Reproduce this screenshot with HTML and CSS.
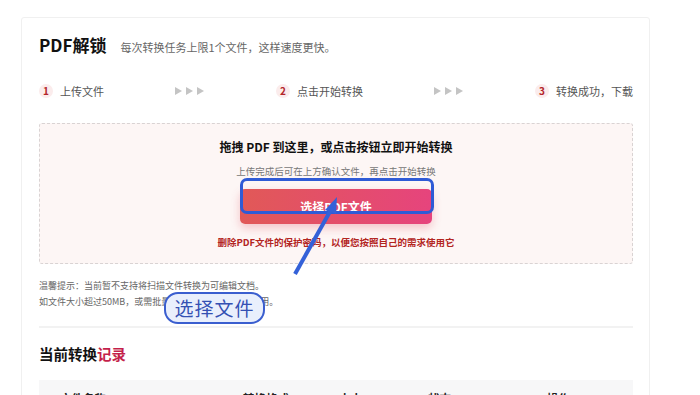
FILE: index.html
```html
<!DOCTYPE html>
<html lang="zh-CN">
<head>
    <meta charset="UTF-8">
    <title>PDF解锁</title>
    <link rel="stylesheet" href="styles.css">
</head>
<body>
    <div class="card">
        <div class="head">
            <h1>PDF解锁</h1>
            <span class="sub">每次转换任务上限1个文件，这样速度更快。</span>
        </div>

        <div class="steps">
            <div class="step"><span class="num">1</span>上传文件</div>
            <svg class="arrows" width="30" height="8" viewBox="0 0 30 8">
                <polygon points="0,0 7,4 0,8" />
                <polygon points="11,0 18,4 11,8" />
                <polygon points="22,0 29,4 22,8" />
            </svg>
            <div class="step"><span class="num">2</span>点击开始转换</div>
            <svg class="arrows" width="30" height="8" viewBox="0 0 30 8">
                <polygon points="0,0 7,4 0,8" />
                <polygon points="11,0 18,4 11,8" />
                <polygon points="22,0 29,4 22,8" />
            </svg>
            <div class="step"><span class="num">3</span>转换成功，下载</div>
        </div>

        <div class="drop">
            <p class="dropTitle">拖拽 PDF 到这里，或点击按钮立即开始转换</p>
            <p class="dropSub">上传完成后可在上方确认文件，再点击开始转换</p>
            <button class="pick" type="button">选择PDF文件</button>
            <p class="dropNote">删除PDF文件的保护密码，以便您按照自己的需求使用它</p>
        </div>

        <div class="hints">
            <p>温馨提示：当前暂不支持将扫描文件转换为可编辑文档。</p>
            <p>如文件大小超过50MB，或需批量转换，请使用客户端应用。</p>
        </div>

        <div class="sep"></div>

        <h2 class="records">当前转换<span>记录</span></h2>

        <div class="table">
            <div class="thead">
                <span>文件名称</span>
                <span>转换格式</span>
                <span>大小</span>
                <span>状态</span>
                <span>操作</span>
            </div>
        </div>
    </div>

    <!-- annotation layer -->
    <div class="mark"></div>
    <svg class="pointer" width="60" height="90" viewBox="0 0 60 90">
        <line x1="8" y1="84" x2="45" y2="18" />
        <polygon points="50,7 38,20 49,24" />
    </svg>
    <div class="label">选择文件</div>
</body>
</html>
```

FILE: styles.css
```css
* {
    margin: 0;
    padding: 0;
    box-sizing: border-box;
}

body {
    position: relative;
    background: #fff;
    color: #222;
    font-family: "Noto Sans CJK SC", "Noto Sans", sans-serif;
    overflow: hidden;
}

.card {
    margin: 17px 0 0 21px;
    width: 629px;
    height: 420px;
    padding: 15px 16px 0 17px;
    border: 1px solid #f0f0f0;
    border-radius: 3px;
    background: #fff;
}

.head {
    display: flex;
    align-items: baseline;
    height: 24px;
}

.head h1 {
    font-size: 17px;
    font-weight: bold;
    line-height: 24px;
    color: #111;
}

.head .sub {
    margin-left: 14px;
    font-size: 11px;
    color: #666;
}

.steps {
    margin-top: 25px;
    height: 18px;
    display: flex;
    align-items: center;
    justify-content: space-between;
}

.step {
    display: flex;
    align-items: center;
    font-size: 11px;
    color: #555;
}

.num {
    width: 14px;
    height: 14px;
    margin-right: 7px;
    border-radius: 50%;
    background: #fbecec;
    color: #b3242a;
    font-size: 10px;
    font-weight: bold;
    line-height: 14px;
    text-align: center;
}

.arrows polygon {
    fill: #c4c4c4;
}

.drop {
    margin-top: 23px;
    height: 141px;
    padding-top: 14px;
    border: 1px dashed #d9d3d3;
    border-radius: 3px;
    background: #fdf6f5;
    display: flex;
    flex-direction: column;
    align-items: center;
}

.dropTitle {
    font-size: 12px;
    font-weight: bold;
    line-height: 18px;
    color: #111;
}

.dropSub {
    margin-top: 8px;
    font-size: 9.5px;
    line-height: 14px;
    color: #777;
}

.pick {
    margin-top: 11px;
    width: 192px;
    height: 35px;
    border: none;
    border-radius: 5px;
    background: linear-gradient(90deg, #e15957, #e6447d);
    box-shadow: 0 4px 10px rgba(225, 80, 95, 0.3);
    color: #fff;
    font-family: inherit;
    font-size: 12px;
    font-weight: bold;
}

.dropNote {
    margin-top: 11px;
    font-size: 9.5px;
    font-weight: bold;
    line-height: 14px;
    color: #b3251f;
}

.hints {
    margin-top: 14px;
    font-size: 9px;
    line-height: 16px;
    color: #666;
}

.sep {
    margin-top: 16px;
    height: 2px;
    background: #f2f2f2;
}

.records {
    margin-top: 16px;
    font-size: 14.5px;
    font-weight: bold;
    line-height: 20px;
    color: #111;
}

.records span {
    color: #c41f4b;
}

.table {
    margin-top: 16px;
}

.thead {
    display: grid;
    grid-template-columns: 183px 96px 89px 119px 1fr;
    height: 36px;
    padding-left: 21px;
    align-items: center;
    background: #f7f7f8;
    font-size: 11.5px;
    font-weight: bold;
    color: #222;
}

/* annotation overlay */
.mark {
    position: absolute;
    left: 240px;
    top: 178px;
    width: 194px;
    height: 36px;
    border: 3px solid #2f5bd6;
    border-radius: 7px;
}

.pointer {
    position: absolute;
    left: 287px;
    top: 190px;
}

.pointer line {
    stroke: #3461d8;
    stroke-width: 4;
}

.pointer polygon {
    fill: #3461d8;
}

.label {
    position: absolute;
    left: 164px;
    top: 292px;
    width: 101px;
    height: 32px;
    border: 2px solid #3a5ecf;
    border-radius: 14px;
    background: #e9effc;
    color: #3450b3;
    font-size: 19px;
    line-height: 28px;
    text-align: center;
    letter-spacing: 1px;
}
```
